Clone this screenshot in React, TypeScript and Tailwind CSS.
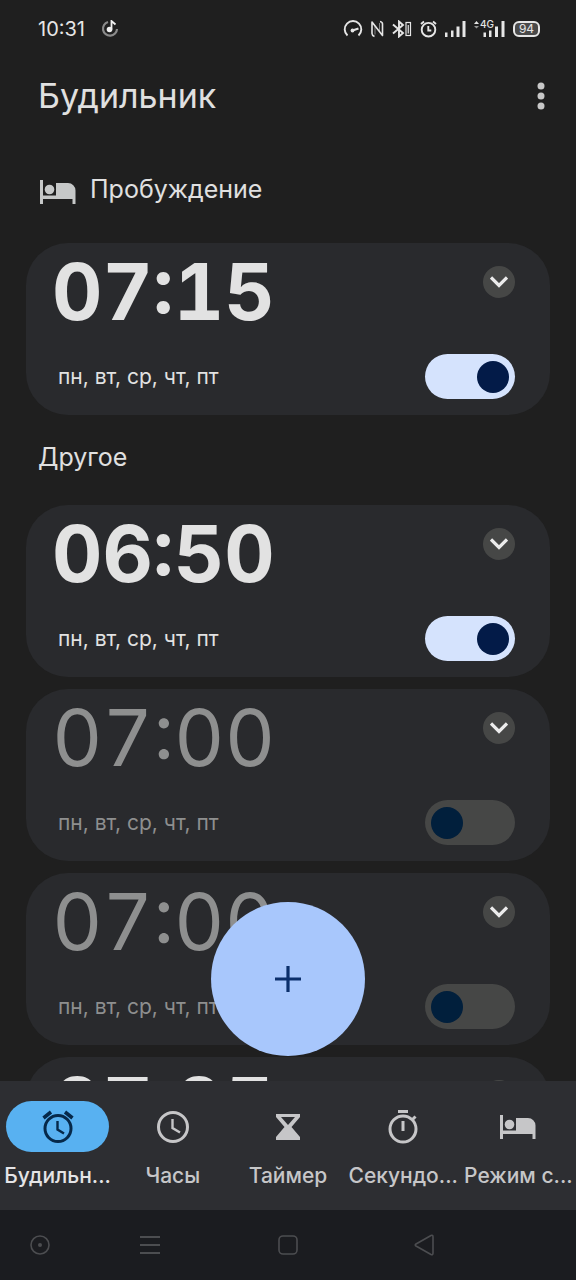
import { useState } from "react"
import type { ReactNode } from "react"

type Alarm = { time: string; days: string; enabled: boolean }

const wakeAlarms: Alarm[] = [{ time: "07:15", days: "пн, вт, ср, чт, пт", enabled: true }]

const otherAlarms: Alarm[] = [
    { time: "06:50", days: "пн, вт, ср, чт, пт", enabled: true },
    { time: "07:00", days: "пн, вт, ср, чт, пт", enabled: false },
    { time: "07:00", days: "пн, вт, ср, чт, пт", enabled: false },
    { time: "07:05", days: "пн, вт, ср, чт, пт", enabled: true },
]

function BedIcon() {
    return (
        <svg width="36" height="24" viewBox="0 0 36 24" fill="currentColor" aria-hidden="true">
            <path d="M0 0h3v15.5h13V3h12a7.500 7.500 0 0 1 7.500 7.500V24h-3v-5H3v5H0z" />
            <circle cx="9.500" cy="9.500" r="4.800" />
        </svg>
    )
}

function AlarmIcon() {
    return (
        <svg width="32" height="34" viewBox="0 0 32 34" fill="none" stroke="currentColor" strokeWidth="3" aria-hidden="true">
            <circle cx="16" cy="18.500" r="13" />
            <path d="M15.500 11v8.500l6.500 4" strokeWidth="2.400" />
            <path d="M1.500 8l7.500-6M30.500 8L23 2" strokeWidth="3.600" />
        </svg>
    )
}

function ClockIcon() {
    return (
        <svg width="34" height="34" viewBox="0 0 34 34" fill="none" stroke="currentColor" strokeWidth="3" aria-hidden="true">
            <circle cx="17" cy="17" r="14.500" />
            <path d="M16.500 9v9l7.500 4.500" strokeWidth="2.400" />
        </svg>
    )
}

function HourglassIcon() {
    return (
        <svg width="24" height="26" viewBox="0 0 24 26" fill="currentColor" aria-hidden="true">
            <path fillRule="evenodd" d="M0 0h24v3l-8.500 10L24 23v3H0v-3l8.500-10L0 3zM5 3l7 8 7-8z" />
        </svg>
    )
}

function StopwatchIcon() {
    return (
        <svg width="30" height="36" viewBox="0 0 30 36" fill="none" stroke="currentColor" strokeWidth="3" aria-hidden="true">
            <circle cx="15" cy="20" r="13" />
            <path d="M10 2.500h10M15 12v10M24 11l3.500-3.500" />
        </svg>
    )
}

const tabs: { label: string; icon: ReactNode }[] = [
    { label: "Будильн...", icon: <AlarmIcon /> },
    { label: "Часы", icon: <ClockIcon /> },
    { label: "Таймер", icon: <HourglassIcon /> },
    { label: "Секундо...", icon: <StopwatchIcon /> },
    { label: "Режим с...", icon: <BedIcon /> },
]

function StatusBar() {
    return (
        <div className="flex h-[58px] shrink-0 items-center justify-between pl-[38px] pr-9 text-[#e6e6e6]">
            <div className="flex items-center gap-4">
                <span className="text-[20px] leading-6">10:31</span>
                <svg width="18" height="18" viewBox="0 0 18 18" fill="none" aria-hidden="true">
                    <path d="M7 2A7 7 0 1 0 16 9" stroke="#8a8a8a" strokeWidth="2.200" />
                    <circle cx="8.500" cy="9.500" r="2.800" fill="#f0f0f0" />
                    <path d="M10.500 9.500V1l4 3.500" stroke="#f0f0f0" strokeWidth="1.800" />
                </svg>
            </div>
            <div className="flex items-center gap-2">
                <svg width="20" height="18" viewBox="0 0 20 18" fill="none" stroke="currentColor" strokeWidth="1.900" aria-hidden="true">
                    <path d="M4.500 15.500A8.300 8.300 0 1 1 15.500 15.500" />
                    <path d="M9.500 10.500L15.500 8.500" strokeWidth="2" />
                    <circle cx="9.500" cy="10.500" r="1.900" fill="currentColor" stroke="none" />
                </svg>
                <svg width="13" height="18" viewBox="0 0 13 18" fill="none" stroke="currentColor" strokeWidth="1.600" strokeLinejoin="round" aria-hidden="true">
                    <path d="M3.500 16.500Q1 15.500 1 13.500V2L11.500 15.500V4Q11.500 2 9 1.500" />
                    <path d="M4 6v8.500M8.500 3v8" strokeWidth="1" opacity=".5" />
                </svg>
                <svg width="20" height="18" viewBox="0 0 20 18" fill="none" stroke="currentColor" strokeWidth="1.900" aria-hidden="true">
                    <path d="M1 4.500l10 8.500-4 3.500v-15L11 5 1 13.500" />
                    <rect x="14" y="2.500" width="4.500" height="13" strokeWidth="1.200" />
                    <path d="M16.250 5v8.500" strokeWidth="1.200" />
                </svg>
                <svg width="17" height="18" viewBox="0 0 17 18" fill="none" stroke="currentColor" strokeWidth="1.900" aria-hidden="true">
                    <circle cx="8.500" cy="9.700" r="6.800" />
                    <path d="M8.300 6v4.500h3M1 4l3-2.500M16 4l-3-2.500" />
                </svg>
                <svg width="21" height="18" viewBox="0 0 21 18" fill="currentColor" aria-hidden="true">
                    <path d="M0 12.500h2.500V17H0zM6 10.500h2.500V17H6zM11.500 6.500h3V17h-3zM17.500 1h3v16h-3z" />
                </svg>
                <svg width="31" height="20" viewBox="0 0 31 20" fill="currentColor" aria-hidden="true">
                    <path d="M9.500 13.500H12V18H9.500zM15 11.500h2.500V18H15zM21 7.500h3V18h-3zM27.500 2h3v16h-3z" />
                    <path d="M0 5l2.500-3L5 5z" />
                    <path d="M0 7h5l-2.500 2.500z" opacity=".6" />
                    <text x="6" y="9" fontSize="10" fontWeight="500">4G</text>
                </svg>
                <span className="flex h-4 w-[27px] items-center justify-center rounded-md border-2 border-[#e6e6e6] bg-[#4a4a4a] text-[12px] leading-3">
                    94
                </span>
            </div>
        </div>
    )
}

function AlarmCard({ alarm }: { alarm: Alarm }) {
    const [enabled, setEnabled] = useState(alarm.enabled)

    return (
        <article
            className={`flex h-[172px] shrink-0 flex-col justify-between rounded-[42px] bg-[#292a2d] pb-4 pl-[26px] pr-[35px] pt-[23px] ${
                enabled ? "text-[#e2e2e2]" : "text-[#8e8f8f]"
            }`}
        >
            <div className="flex items-start justify-between">
                <h3 className={`text-[78px] leading-[52px] tabular-nums ${enabled ? "font-bold" : "font-normal"}`}>{alarm.time}</h3>
                <button
                    type="button"
                    aria-label="Развернуть"
                    className="flex size-8 items-center justify-center rounded-full bg-[#464746] text-[#ececec]"
                >
                    <svg width="18" height="12" viewBox="0 0 18 12" fill="none" stroke="currentColor" strokeWidth="3.200" aria-hidden="true">
                        <path d="M1 1.500l8 8 8-8" />
                    </svg>
                </button>
            </div>
            <label className="flex items-center justify-between">
                <span className="pl-1.5 text-[21px] leading-6">{alarm.days}</span>
                <input
                    type="checkbox"
                    role="switch"
                    checked={enabled}
                    onChange={(e) => setEnabled(e.target.checked)}
                    className="flex h-[45px] w-[90px] appearance-none items-center rounded-full bg-[#464746] px-1.5 before:size-8 before:rounded-full before:bg-[#011f3c] checked:justify-end checked:bg-[#d5e3fd] checked:before:bg-[#031b48]"
                />
            </label>
        </article>
    )
}

function TabBar() {
    const [active, setActive] = useState(0)

    return (
        <nav className="grid h-[129px] shrink-0 grid-cols-5 bg-[#2d2e32] pt-5">
            {tabs.map((tab, i) => (
                <button
                    key={tab.label}
                    type="button"
                    onClick={() => setActive(i)}
                    className={`flex flex-col items-center gap-3 ${i === active ? "text-[#e4e4e6]" : "text-[#c6c6c8]"}`}
                >
                    <span
                        className={`flex h-[51px] w-[103px] items-center justify-center rounded-full ${
                            i === active ? "bg-[#58b1f1] text-[#06294a]" : ""
                        }`}
                    >
                        {tab.icon}
                    </span>
                    <span className="whitespace-nowrap text-[21px] font-medium leading-6">{tab.label}</span>
                </button>
            ))}
        </nav>
    )
}

function SystemBar() {
    return (
        <div className="grid h-[70px] shrink-0 grid-cols-[80fr_140fr_136fr_136fr_84fr] place-items-center bg-[#1b1c20] text-[#4c4d50]">
            <button type="button" aria-label="Ассистент">
                <svg width="20" height="20" viewBox="0 0 20 20" fill="none" stroke="currentColor" strokeWidth="1.600">
                    <circle cx="10" cy="10" r="9" />
                    <circle cx="10" cy="10" r="2" fill="currentColor" stroke="none" />
                </svg>
            </button>
            <button type="button" aria-label="Недавние">
                <svg width="20" height="20" viewBox="0 0 20 20" stroke="currentColor" strokeWidth="1.800">
                    <path d="M0 2h20M0 10h20M0 18h20" />
                </svg>
            </button>
            <button type="button" aria-label="Домой">
                <svg width="20" height="20" viewBox="0 0 20 20" fill="none" stroke="currentColor" strokeWidth="1.600">
                    <rect x="1" y="1" width="18" height="18" rx="4" />
                </svg>
            </button>
            <button type="button" aria-label="Назад">
                <svg width="20" height="22" viewBox="0 0 20 22" fill="none" stroke="currentColor" strokeWidth="1.600" strokeLinejoin="round">
                    <path d="M17 1.500L2 10q-1.500 1 0 2l15 8.500q2 .8 2-1.500V3q0-2.300-2-1.500z" />
                </svg>
            </button>
        </div>
    )
}

export default function App() {
    return (
        <div className="flex h-screen flex-col overflow-hidden bg-[#1f1f1f] font-['Inter','Noto_Sans',sans-serif] text-[#e0e0e0]">
            <StatusBar />
            <header className="flex h-[76px] shrink-0 items-center justify-between pl-[38px] pr-[31px]">
                <h1 className="text-[34px] leading-10">Будильник</h1>
                <button type="button" aria-label="Ещё" className="text-[#c8c8c8]">
                    <svg width="8" height="28" viewBox="0 0 8 28" fill="currentColor">
                        <circle cx="4" cy="4" r="3.500" />
                        <circle cx="4" cy="14" r="3.500" />
                        <circle cx="4" cy="24" r="3.500" />
                    </svg>
                </button>
            </header>
            <div className="relative min-h-0 flex-1">
                <main className="flex h-full flex-col overflow-hidden px-[26px]">
                    <h2 className="flex h-[109px] shrink-0 items-center gap-3.5 pl-3.5 text-[25px] leading-8">
                        <span className="pt-1.5 text-[#c6c8c8]">
                            <BedIcon />
                        </span>
                        Пробуждение
                    </h2>
                    {wakeAlarms.map((alarm, i) => (
                        <AlarmCard key={i} alarm={alarm} />
                    ))}
                    <h2 className="flex h-[90px] shrink-0 items-center pb-1.5 pl-3 text-[25px] leading-8">Другое</h2>
                    <div className="flex flex-col gap-3">
                        {otherAlarms.map((alarm, i) => (
                            <AlarmCard key={i} alarm={alarm} />
                        ))}
                    </div>
                </main>
                <button
                    type="button"
                    aria-label="Добавить будильник"
                    className="absolute bottom-[25px] left-1/2 flex size-[154px] -translate-x-1/2 items-center justify-center rounded-full bg-[#a8c7fc] text-[#0b2f6b]"
                >
                    <svg width="26" height="26" viewBox="0 0 26 26" stroke="currentColor" strokeWidth="3.200">
                        <path d="M13 0v26M0 13h26" />
                    </svg>
                </button>
            </div>
            <TabBar />
            <SystemBar />
        </div>
    )
}
